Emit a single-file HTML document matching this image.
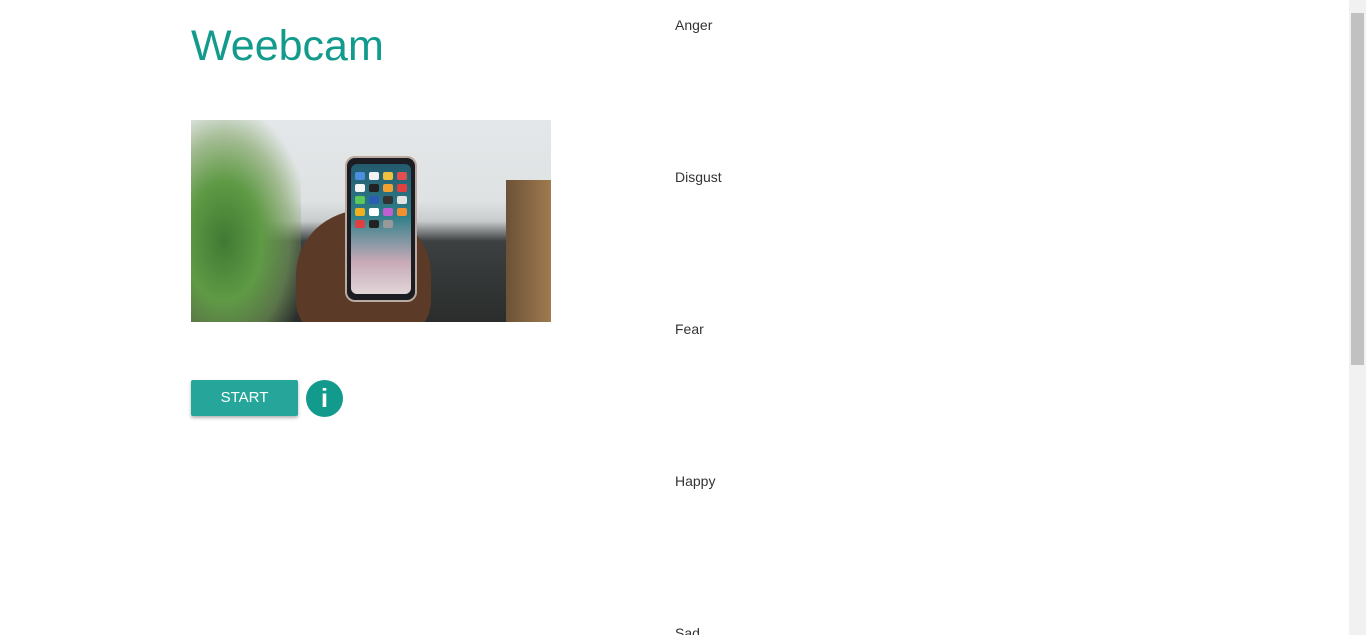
<!DOCTYPE html>
<html><head><meta charset="utf-8"><style>
html,body{margin:0;padding:0;overflow:hidden}
body{width:1366px;height:635px;background:#fff;font-family:"Liberation Sans",Roboto,sans-serif;position:relative}
h1{position:absolute;left:191px;top:19px;margin:0;font-weight:400;font-size:43px;color:#129b8c;line-height:54px}
.img{position:absolute;left:191px;top:120px;width:360px;height:202px;overflow:hidden;
background:linear-gradient(180deg,#e4e7e9 0%,#dfe2e3 40%,#c9cccc 50%,#3c4040 60%,#2a2d2c 100%)}
.plant{position:absolute;left:0;top:0;width:110px;height:202px;background:radial-gradient(ellipse at 30% 60%,#3f7a33 0%,#5f9a45 35%,rgba(120,160,90,.6) 60%,rgba(220,225,225,0) 80%)}
.box{position:absolute;right:0;top:60px;width:45px;height:142px;background:linear-gradient(90deg,#6b5236,#a07a50)}
.hand{position:absolute;left:105px;top:90px;width:135px;height:130px;border-radius:50% 50% 30% 30%;background:#5b3b27}
.phone{position:absolute;left:154px;top:36px;width:68px;height:142px;border-radius:10px;background:#1b1d22;border:2px solid #b9a9a0}
.scr{position:absolute;left:4px;top:6px;right:4px;bottom:6px;border-radius:6px;background:linear-gradient(180deg,#235a6e 0%,#2e7f8a 40%,#c7a9b6 75%,#e2d6d8 100%)}
.apps{position:absolute;left:4px;top:8px;right:4px;display:grid;grid-template-columns:repeat(4,1fr);gap:4px}
.apps i{display:block;height:8px;border-radius:2px;background:#ddd}
.btn{position:absolute;left:191px;top:380px;width:107px;height:36px;background:#26a69a;color:#fff;font-size:15px;text-align:center;line-height:36px;border-radius:2px;box-shadow:0 2px 3px rgba(0,0,0,.3)}
.info{position:absolute;left:306px;top:380px;width:37px;height:37px;border-radius:50%;background:#129b8c;color:#fff;font-weight:700;font-size:26px;text-align:center;line-height:37px}
.lbl{position:absolute;left:675px;font-size:14px;color:#333}
.sb{position:absolute;right:0;top:0;width:17px;height:635px;background:#f1f1f1}
.th{position:absolute;left:2px;top:13px;width:13px;height:352px;background:#c1c1c1}
</style></head><body>
<h1>Weebcam</h1>
<div class="img"><div class="plant"></div><div class="box"></div><div class="hand"></div>
<div class="phone"><div class="scr"><div class="apps">
<i style="background:#4a8fe0"></i><i style="background:#f2f2f2"></i><i style="background:#f0c040"></i><i style="background:#e05050"></i>
<i style="background:#f5f5f5"></i><i style="background:#222"></i><i style="background:#f2a030"></i><i style="background:#e04040"></i>
<i style="background:#5ac85a"></i><i style="background:#2b5cb8"></i><i style="background:#333"></i><i style="background:#e3e3e3"></i>
<i style="background:#f0b020"></i><i style="background:#fff"></i><i style="background:#c060d0"></i><i style="background:#f09030"></i>
<i style="background:#e04040"></i><i style="background:#222"></i><i style="background:#999"></i><i style="background:transparent"></i>
</div></div></div></div>
<div class="btn">START</div>
<div class="info">i</div>
<div class="lbl" style="top:17px">Anger</div>
<div class="lbl" style="top:169px">Disgust</div>
<div class="lbl" style="top:321px">Fear</div>
<div class="lbl" style="top:473px">Happy</div>
<div class="lbl" style="top:625px">Sad</div>
<div class="sb"><div class="th"></div></div>
</body></html>
